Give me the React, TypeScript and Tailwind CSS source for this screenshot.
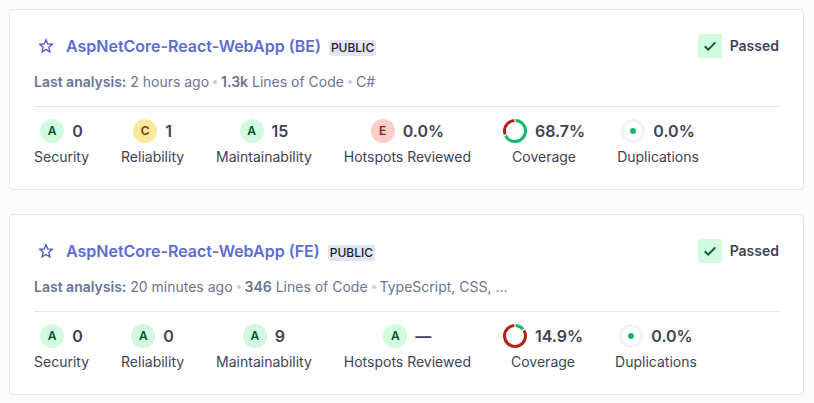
import React from "react";

type Rating = "A" | "C" | "E";

interface Metric {
  label: string;
  value: string;
  rating?: Rating;
  coverage?: number;
}

interface Project {
  name: string;
  analysed: string;
  lines: string;
  languages: string;
  metrics: Metric[];
}

const projects: Project[] = [
  {
    name: "AspNetCore-React-WebApp (BE)",
    analysed: "2 hours ago",
    lines: "1.3k",
    languages: "C#",
    metrics: [
      { label: "Security", value: "0", rating: "A" },
      { label: "Reliability", value: "1", rating: "C" },
      { label: "Maintainability", value: "15", rating: "A" },
      { label: "Hotspots Reviewed", value: "0.0%", rating: "E" },
      { label: "Coverage", value: "68.7%", coverage: 68.7 },
      { label: "Duplications", value: "0.0%" },
    ],
  },
  {
    name: "AspNetCore-React-WebApp (FE)",
    analysed: "20 minutes ago",
    lines: "346",
    languages: "TypeScript, CSS, ...",
    metrics: [
      { label: "Security", value: "0", rating: "A" },
      { label: "Reliability", value: "0", rating: "A" },
      { label: "Maintainability", value: "9", rating: "A" },
      { label: "Hotspots Reviewed", value: "—", rating: "A" },
      { label: "Coverage", value: "14.9%", coverage: 14.9 },
      { label: "Duplications", value: "0.0%" },
    ],
  },
];

const ratingStyles: Record<Rating, string> = {
  A: "bg-[#d1fadf] text-[#054f31]",
  C: "bg-[#fde89b] text-[#713b12]",
  E: "bg-[#fecdca] text-[#7a271a]",
};

function RatingBadge({ rating }: { rating: Rating }) {
  return (
    <span
      className={`flex size-6 items-center justify-center rounded-full text-xs font-semibold ${ratingStyles[rating]}`}
    >
      {rating}
    </span>
  );
}

function CoverageRing({ percent }: { percent: number }) {
  const covered = percent - 2;
  const missing = 100 - percent - 2;
  return (
    <svg className="size-6" viewBox="0 0 24 24" fill="none" strokeWidth="3" aria-hidden="true">
      <g transform="rotate(-90 12 12)">
        <circle
          cx="12"
          cy="12"
          r="10.5"
          stroke="#12b76a"
          pathLength="100"
          strokeDasharray={`${covered} ${100 - covered}`}
          strokeDashoffset={-1}
        />
        <circle
          cx="12"
          cy="12"
          r="10.5"
          stroke="#b42318"
          pathLength="100"
          strokeDasharray={`${missing} ${100 - missing}`}
          strokeDashoffset={-(percent + 1)}
        />
      </g>
    </svg>
  );
}

function DuplicationDot() {
  return (
    <svg className="size-6" viewBox="0 0 24 24" fill="none" aria-hidden="true">
      <circle cx="12" cy="12" r="10.5" stroke="#eff2f9" strokeWidth="3" />
      <circle cx="12" cy="12" r="3" fill="#12b76a" />
    </svg>
  );
}

function MetricItem({ metric }: { metric: Metric }) {
  return (
    <li className="flex flex-col items-center gap-1">
      <div className="flex items-center gap-2">
        {metric.rating ? (
          <RatingBadge rating={metric.rating} />
        ) : metric.coverage !== undefined ? (
          <CoverageRing percent={metric.coverage} />
        ) : (
          <DuplicationDot />
        )}
        <span className="text-base font-semibold">{metric.value}</span>
      </div>
      <span className="text-sm">{metric.label}</span>
    </li>
  );
}

function Separator() {
  return <span className="mx-1 size-1 rounded-full bg-[#c5cddf]" />;
}

function ProjectCard({ project }: { project: Project }) {
  return (
    <li className="rounded-[4px] border border-[#e1e6f3] bg-white px-6 pt-6 pb-[22px] text-[#3e4357]">
      <div className="flex h-6 items-center justify-between">
        <div className="flex items-center">
          <button
            type="button"
            aria-label="Add to favorites"
            className="mr-2 flex size-6 items-center justify-center text-[#4b56c0]"
          >
            <svg className="size-4" viewBox="0 0 16 16" fill="none" stroke="currentColor" strokeWidth="1.3">
              <path d="M8 1.7 9.75 5.95 14.3 6.3 10.85 9.3 11.9 13.8 8 11.4 4.1 13.8 5.15 9.3 1.7 6.3 6.25 5.95Z" />
            </svg>
          </button>
          <a href="#" className="text-base font-semibold text-[#5d6cd0]">
            {project.name}
          </a>
          <span className="mt-1 ml-2 rounded-[2px] bg-[#e1e6f3] px-0.5 text-xs leading-4 font-medium text-[#1d212f]">
            PUBLIC
          </span>
        </div>
        <div className="flex items-center gap-2">
          <span className="flex size-6 items-center justify-center rounded-[2px] bg-[#d1fadf]">
            <svg className="size-4" viewBox="0 0 16 16" fill="none" stroke="#05603a" strokeWidth="2" aria-hidden="true">
              <path d="M2.8 8.2 6.2 11.6 13.4 4.4" />
            </svg>
          </span>
          <span className="text-sm font-semibold">Passed</span>
        </div>
      </div>
      <div className="mt-3 flex h-6 items-center text-sm text-[#6a7590]">
        <span>
          <b className="font-semibold">Last analysis:</b> {project.analysed}
        </span>
        <Separator />
        <span>
          <b className="font-semibold">{project.lines}</b> Lines of Code
        </span>
        <Separator />
        <span>{project.languages}</span>
      </div>
      <hr className="mt-3 border-[#e1e6f3]" />
      <ul className="mt-3 flex gap-8">
        {project.metrics.map((metric) => (
          <MetricItem key={metric.label} metric={metric} />
        ))}
      </ul>
    </li>
  );
}

export default function App() {
  return (
    <main className="min-h-screen bg-[#fcfcfd] py-[9px] pr-2.5 pl-[9px] font-['Inter',sans-serif]">
      <ul className="flex flex-col gap-6">
        {projects.map((project) => (
          <ProjectCard key={project.name} project={project} />
        ))}
      </ul>
    </main>
  );
}
